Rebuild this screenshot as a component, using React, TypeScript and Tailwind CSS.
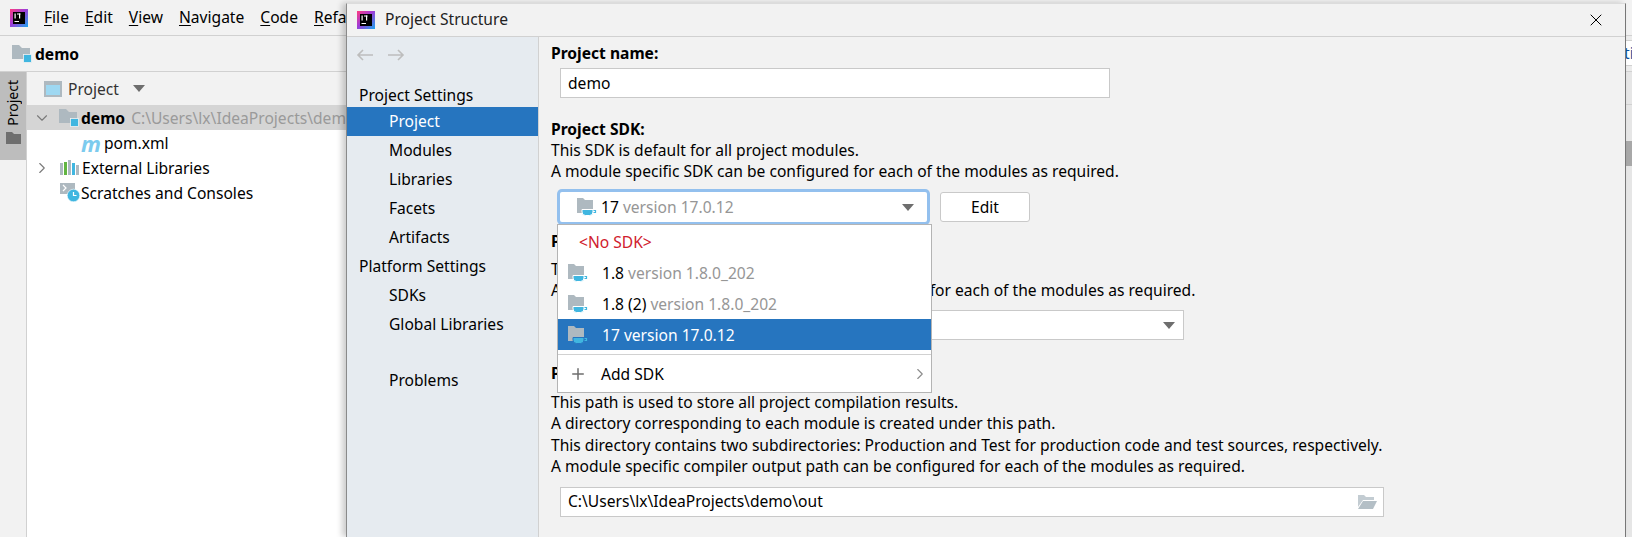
import type { ReactNode } from "react";
import { ChevronDown, ChevronRight, Plus, X } from "lucide-react";

const font = { fontFamily: '"Noto Sans", "Open Sans", sans-serif' };

function IdeaLogo() {
  return (
    <svg width="18" height="18" viewBox="0 0 18 18" className="shrink-0">
      <defs>
        <linearGradient id="ij" x1="0" y1="0" x2="1" y2="1">
          <stop offset="0" stopColor="#ff3d7f" />
          <stop offset="0.45" stopColor="#a03bd6" />
          <stop offset="1" stopColor="#1aa6f0" />
        </linearGradient>
      </defs>
      <rect width="18" height="18" fill="url(#ij)" />
      <rect x="3" y="3" width="12" height="12" fill="#000" />
      <rect x="4.500" y="4.500" width="1.200" height="5" fill="#fff" />
      <rect x="7" y="4.500" width="3.500" height="1" fill="#fff" />
      <rect x="9" y="4.500" width="1.200" height="5" fill="#fff" />
      <rect x="4.500" y="12" width="4.500" height="1" fill="#fff" />
    </svg>
  );
}

function ModuleFolder() {
  return (
    <svg width="20" height="18" viewBox="0 0 20 18" className="shrink-0">
      <path d="M0 0h7l3 3h8v11H0z" fill="#aeb9c0" />
      <rect x="11.500" y="9.500" width="8" height="8" fill="#40b6e0" stroke="#f2f2f2" strokeWidth="0.8" />
    </svg>
  );
}

function JdkFolder({ halo = "#ffffff" }: { halo?: string }) {
  return (
    <svg width="20" height="18" viewBox="0 0 20 18" className="shrink-0">
      <path d="M0 0h6l2 2h8v13H0z" fill="#aeb9c0" />
      <path d="M5 11.500h11v2.500a3.500 3.500 0 0 1-3.500 3.500h-4A3.500 3.500 0 0 1 5 14z" fill="#40b6e0" stroke={halo} strokeWidth="1" />
      <path d="M16.500 12.500h2v2h-2" fill="none" stroke="#40b6e0" strokeWidth="1.200" />
    </svg>
  );
}

function Arrow() {
  return (
    <svg width="12" height="7" viewBox="0 0 12 7">
      <path d="M0 0h12L6 7z" fill="#6e6e6e" />
    </svg>
  );
}

function Menu({ first, rest }: { first: string; rest: string }) {
  return (
    <span>
      <span className="underline underline-offset-2">{first}</span>
      {rest}
    </span>
  );
}

function Ide() {
  return (
    <div className="flex h-[537px] flex-col bg-[#f2f2f2]">
      <div className="flex h-[36px] shrink-0 items-center border-b border-[#d1d1d1] pl-[10px] text-[15.6px] text-black">
        <IdeaLogo />
        <div className="ml-[16px] flex gap-[16px] whitespace-nowrap pt-[1px]">
          <Menu first="F" rest="ile" />
          <Menu first="E" rest="dit" />
          <Menu first="V" rest="iew" />
          <Menu first="N" rest="avigate" />
          <Menu first="C" rest="ode" />
          <Menu first="R" rest="efactor" />
        </div>
      </div>
      <div className="flex h-[36px] shrink-0 items-center gap-[3px] border-b border-[#d1d1d1] pl-[12px] text-[15.6px] font-bold text-black">
        <ModuleFolder />
        <span className="pt-[2px]">demo</span>
      </div>
      <div className="flex min-h-0 flex-1">
        <div className="w-[27px] shrink-0 border-r border-[#d1d1d1]">
          <div className="flex h-[88px] flex-col items-center bg-[#bdbdbd] pt-[8px]">
            <span className="text-[14px] leading-[18px] text-black [transform:rotate(180deg)] [writing-mode:vertical-rl]">Project</span>
            <svg width="15" height="12" viewBox="0 0 15 12" className="mt-[6px]">
              <path d="M0 0h6l2 2h7v10H0z" fill="#6e6e6e" />
            </svg>
          </div>
        </div>
        <div className="flex-1 bg-white">
          <div className="flex h-[33px] items-center bg-[#f2f2f2] pl-[17px] text-[15.6px] text-[#333]">
            <svg width="18" height="16" viewBox="0 0 18 16">
              <rect width="18" height="16" fill="#aeb9c0" />
              <rect x="2" y="4" width="14" height="10" fill="#9ed8f2" />
            </svg>
            <span className="ml-[6px] pt-[2px]">Project</span>
            <span className="ml-[14px]"><Arrow /></span>
          </div>
          <div className="text-[15.6px] text-black">
            <div className="flex h-[25px] items-center whitespace-nowrap bg-[#d5d5d5] pl-[6px]">
              <ChevronDown size={18} strokeWidth={1.5} className="text-[#7a7a7a]" />
              <span className="ml-[8px]"><ModuleFolder /></span>
              <span className="ml-[2px] pt-[2px] font-bold">demo</span>
              <span className="ml-[6px] pt-[2px] text-[#9a9a9a]">C:\Users\lx\IdeaProjects\demo</span>
            </div>
            <div className="flex h-[25px] items-center pl-[54px]">
              <span className="w-[23px] text-[22px] font-bold italic leading-none text-[#7ccbee]">m</span>
              <span className="pt-[2px]">pom.xml</span>
            </div>
            <div className="flex h-[25px] items-center pl-[6px]">
              <ChevronRight size={18} strokeWidth={1.5} className="text-[#7a7a7a]" />
              <svg width="19" height="15" viewBox="0 0 19 15" className="ml-[9px]">
                <rect x="0" y="3" width="3" height="12" fill="#aeb9c0" />
                <rect x="4" y="2" width="3" height="13" fill="#62b543" />
                <rect x="8" y="0" width="3" height="15" fill="#aeb9c0" />
                <rect x="12" y="3" width="3" height="12" fill="#40b6e0" />
                <rect x="16" y="5" width="3" height="10" fill="#aeb9c0" />
              </svg>
              <span className="ml-[3px] pt-[2px]">External Libraries</span>
            </div>
            <div className="flex h-[25px] items-center pl-[33px]">
              <svg width="20" height="19" viewBox="0 0 20 19">
                <rect x="0" y="0" width="15" height="11" fill="#aeb9c0" />
                <path d="M3 2l3 3-3 3" fill="none" stroke="#fff" strokeWidth="1.200" />
                <circle cx="13.500" cy="12.500" r="6.300" fill="#40b6e0" stroke="#fff" strokeWidth="0.600" />
                <path d="M13.500 9v3.500h3" fill="none" stroke="#fff" strokeWidth="1.200" />
              </svg>
              <span className="ml-[1px] pt-[2px]">Scratches and Consoles</span>
            </div>
          </div>
        </div>
      </div>
    </div>
  );
}

// sliver of the editor still visible to the right of the dialog
function EditorSliver() {
  return (
    <div className="absolute right-0 top-0 flex h-[537px] w-[6px] flex-col overflow-hidden bg-[#e6e6e6]">
      <div className="h-[35px] shrink-0 bg-[#f2f2f2]" />
      <div className="h-[6px] shrink-0 border-y border-[#d1d1d1] bg-[#ececec]" />
      <div className="-ml-[2px] h-[24px] shrink-0 whitespace-nowrap bg-white text-[15.6px] leading-[24px] text-[#0b4f9e]">ti</div>
      <div className="h-[7px] shrink-0 border-y border-[#d1d1d1] bg-[#ececec]" />
      <div className="h-[33px] shrink-0 border-b border-[#d1d1d1]" />
      <div className="mt-[36px] h-[25px] shrink-0 bg-[#a8a8a8]" />
    </div>
  );
}

function NavRow({ label, selected }: { label: string; selected?: boolean }) {
  return (
    <div className={`flex h-[29px] items-center pl-[42px] pt-[1px] ${selected ? "bg-[#2675bf] text-white" : "text-black"}`}>{label}</div>
  );
}

function Field({ children, className }: { children: ReactNode; className: string }) {
  return (
    <div className={`flex items-center border border-[#c9c9c9] bg-white pl-[7px] pr-[6px] text-black ${className}`}>{children}</div>
  );
}

function SdkPopup() {
  return (
    <div className="absolute left-[210px] top-[187px] z-10 w-[375px] border border-[#b4b4b4] bg-white text-[15.6px] text-black">
      <div className="flex h-[32px] items-center pl-[21px] pt-[3px] text-[#d0202d]">&lt;No SDK&gt;</div>
      <div className="flex h-[31px] items-center pl-[10px]">
        <JdkFolder />
        <span className="ml-[14px] pt-[2px]">1.8 <span className="text-[#969696]">version 1.8.0_202</span></span>
      </div>
      <div className="flex h-[31px] items-center pl-[10px]">
        <JdkFolder />
        <span className="ml-[14px] pt-[2px]">1.8 (2) <span className="text-[#969696]">version 1.8.0_202</span></span>
      </div>
      <div className="flex h-[31px] items-center bg-[#2675bf] pl-[10px] text-white">
        <JdkFolder halo="#2675bf" />
        <span className="ml-[14px] pt-[2px]">17 version 17.0.12</span>
      </div>
      <div className="mt-[4px] border-t border-[#d1d1d1]" />
      <div className="flex h-[37px] items-center pl-[11px]">
        <Plus size={18} strokeWidth={2} className="text-[#6e6e6e]" />
        <span className="ml-[14px] pt-[2px]">Add SDK</span>
        <ChevronRight size={18} strokeWidth={1.5} className="ml-auto mr-[2px] text-[#8c8c8c]" />
      </div>
    </div>
  );
}

function Dialog() {
  return (
    <div className="absolute left-[346px] top-[3px] flex h-[534px] w-[1280px] flex-col border-l border-r border-t border-l-[#8a8a8a] border-r-[#777] border-t-[#dcdcdc] bg-[#f2f2f2] text-[15.6px] shadow-[-4px_0_6px_rgba(0,0,0,0.2)]">
      <div className="flex h-[33px] shrink-0 items-center border-b border-[#d1d1d1] pb-[1px] pl-[10px]">
        <IdeaLogo />
        <span className="ml-[10px] text-[#222]">Project Structure</span>
        <X size={20} strokeWidth={1.2} className="ml-auto mr-[19px] text-black" />
      </div>
      <div className="relative flex min-h-0 flex-1">
        <div className="w-[192px] shrink-0 border-r border-[#d1d1d1] bg-[#e6ebf0]">
          <div className="flex h-[35px] items-center gap-[15px] pl-[9px]">
            <svg width="17" height="12" viewBox="0 0 17 12"><path d="M17 6H2M7 1L2 6l5 5" fill="none" stroke="#bdbdbd" strokeWidth="1.600" /></svg>
            <svg width="17" height="12" viewBox="0 0 17 12"><path d="M0 6h15M10 1l5 5-5 5" fill="none" stroke="#bdbdbd" strokeWidth="1.600" /></svg>
          </div>
          <div className="flex h-[35px] items-end pl-[12px] text-black">Project Settings</div>
          <NavRow label="Project" selected />
          <NavRow label="Modules" />
          <NavRow label="Libraries" />
          <NavRow label="Facets" />
          <NavRow label="Artifacts" />
          <div className="flex h-[29px] items-center pl-[12px] pt-[1px] text-black">Platform Settings</div>
          <NavRow label="SDKs" />
          <NavRow label="Global Libraries" />
          <div className="h-[27px]" />
          <NavRow label="Problems" />
        </div>
        <div className="flex-1 pl-[12px] pt-[6px] leading-[21px] text-black">
          <div className="font-bold">Project name:</div>
          <Field className="ml-[9px] mt-[4px] h-[30px] w-[550px]">demo</Field>
          <div className="mt-[21px] font-bold">Project SDK:</div>
          <div>This SDK is default for all project modules.</div>
          <div>A module specific SDK can be configured for each of the modules as required.</div>
          <div className="ml-[9px] mt-[10px] flex items-center gap-[13px]">
            <div className="flex h-[30px] w-[367px] items-center rounded-[2px] bg-white pl-[17px] pr-[13px] shadow-[0_0_0_3px_#93c0ee]">
              <JdkFolder />
              <span className="ml-[4px]">17 <span className="text-[#969696]">version 17.0.12</span></span>
              <span className="ml-auto"><Arrow /></span>
            </div>
            <div className="flex h-[30px] w-[90px] items-center justify-center rounded-[3px] border border-[#c9c9c9] bg-white">Edit</div>
          </div>
          <div className="mt-[9px] font-bold">Project language level:</div>
          <div className="mt-[7px]">This language level is used for all project modules.</div>
          <div>A module specific language level can be configured for each of the modules as required.</div>
          <Field className="ml-[9px] mt-[9px] h-[30px] w-[624px] justify-end pr-[8px]"><Arrow /></Field>
          <div className="mt-[23px] font-bold">Project compiler output:</div>
          <div className="mt-[8px] leading-[21.400px]">
            <div>This path is used to store all project compilation results.</div>
            <div>A directory corresponding to each module is created under this path.</div>
            <div>This directory contains two subdirectories: Production and Test for production code and test sources, respectively.</div>
            <div>A module specific compiler output path can be configured for each of the modules as required.</div>
          </div>
          <Field className="ml-[9px] mt-[9px] h-[30px] w-[824px] justify-between">
            C:\Users\lx\IdeaProjects\demo\out
            <svg width="19" height="14" viewBox="0 0 19 14">
              <path d="M0 0h6l2 2h8v3H5L0 12z" fill="#c3ccd2" />
              <path d="M5 6h14l-4 8H0z" fill="#b4bfc6" />
            </svg>
          </Field>
        </div>
        <SdkPopup />
      </div>
    </div>
  );
}

export default function App() {
  return (
    <div className="relative h-[537px] w-[1632px] overflow-hidden bg-white" style={font}>
      <Ide />
      <EditorSliver />
      <Dialog />
    </div>
  );
}
